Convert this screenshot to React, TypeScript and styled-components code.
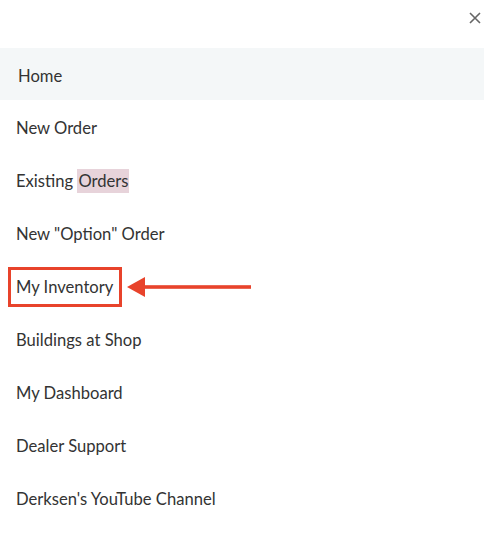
import React from 'react';
import styled, { createGlobalStyle } from 'styled-components';

const GlobalStyle = createGlobalStyle`
    body {
        margin: 0;
        background: #fff;
        font-family: Lato, "Open Sans", sans-serif;
    }
`;

const items = [
    { label: 'Home', active: true },
    { label: 'New Order' },
    { label: 'Existing Orders', highlight: 'Orders' },
    { label: 'New "Option" Order' },
    { label: 'My Inventory', marked: true },
    { label: 'Buildings at Shop' },
    { label: 'My Dashboard' },
    { label: 'Dealer Support' },
    { label: "Derksen's YouTube Channel" },
];

export default function App() {
    return <>
        <GlobalStyle />
        <Drawer>
            <Header>
                <CloseButton aria-label="Close">
                    <svg width="12" height="12" viewBox="0 0 12 12">
                        <path d="M1 1 L11 11 M11 1 L1 11" stroke="#666" strokeWidth="1.6" fill="none" />
                    </svg>
                </CloseButton>
            </Header>
            <Nav>
                {items.map(item => <Item key={item.label} $active={item.active}>
                    {item.marked
                        ? <>
                            <Marked>{item.label}</Marked>
                            <Arrow />
                        </>
                        : <Label text={item.label} highlight={item.highlight} />}
                </Item>)}
            </Nav>
        </Drawer>
    </>;
}

const Label = ({ text, highlight }: { text: string; highlight?: string }) => {
    if (!highlight) return <span>{text}</span>;
    const at = text.indexOf(highlight);
    return <span>
        {text.slice(0, at)}
        <Highlight>{highlight}</Highlight>
        {text.slice(at + highlight.length)}
    </span>;
};

const Arrow = () => <ArrowSvg width="126" height="22" viewBox="0 0 126 22">
    <polygon points="0,11 18,1 18,21" fill="#e8432b" />
    <rect x="16" y="9.2" width="108" height="3.6" fill="#e8432b" />
</ArrowSvg>;

const Drawer = styled.div`
    width: 484px;
    height: 543px;
    background: #fff;
    display: flex;
    flex-direction: column;
`;

const Header = styled.div`
    height: 48px;
    display: flex;
    justify-content: flex-end;
    align-items: flex-start;
    padding: 12px 3px 0 0;
    box-sizing: border-box;
`;

const CloseButton = styled.button`
    border: 0;
    background: none;
    padding: 0;
    width: 12px;
    height: 12px;
    display: flex;
    cursor: pointer;
`;

const Nav = styled.nav`
    display: flex;
    flex-direction: column;
`;

const Item = styled.a<{ $active?: boolean }>`
    display: flex;
    align-items: center;
    height: ${p => p.$active ? 52 : 53}px;
    padding-left: ${p => p.$active ? 18 : 16}px;
    padding-top: 3px;
    box-sizing: border-box;
    background: ${p => p.$active ? '#f4f7f8' : 'transparent'};
    color: #333;
    font-size: 16.6px;
    text-decoration: none;
`;

const Highlight = styled.span`
    background: #e7d3da;
    padding: 2px 1px;
`;

const Marked = styled.span`
    display: inline-flex;
    align-items: center;
    margin-left: -8px;
    height: 40px;
    box-sizing: border-box;
    padding: 0 6px 0 5px;
    border: 3px solid #e8432b;
`;

const ArrowSvg = styled.svg`
    margin-left: 5px;
`;
